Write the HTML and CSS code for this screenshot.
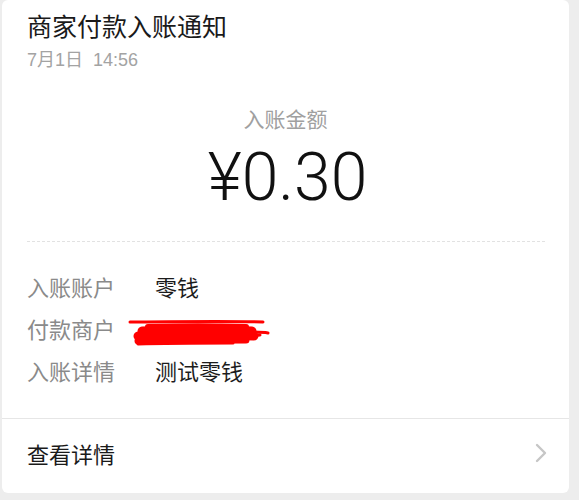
FILE: index.html
```html
<!DOCTYPE html>
<html lang="zh-CN">
<head>
<meta charset="utf-8">
<title>商家付款入账通知</title>
<link rel="stylesheet" href="styles.css">
</head>
<body>
<div class="card">
  <div class="head">
    <div class="title">商家付款入账通知</div>
    <div class="date">7月1日&nbsp;&nbsp;14:56</div>
  </div>
  <div class="amount-block">
    <div class="amount-label">入账金额</div>
    <div class="amount">¥0.30</div>
  </div>
  <div class="dash"></div>
  <div class="rows">
    <div class="row"><span class="label">入账账户</span><span class="value">零钱</span></div>
    <div class="row"><span class="label">付款商户</span><span class="value redacted">
      <svg class="scribble" width="146" height="30" viewBox="0 0 146 30">
        <g fill="none" stroke="#ff0000" stroke-linecap="round" stroke-linejoin="round">
          <path d="M2 4 C40 4 90 3 135 4" stroke-width="3"/>
          <path d="M20 9 C50 8 90 8 118 9" stroke-width="6"/>
          <path d="M14 13 C45 12 95 12 124 13" stroke-width="9"/>
          <path d="M10 18 C40 17 90 17 126 18" stroke-width="9"/>
          <path d="M10 23 C40 22 90 22 118 22" stroke-width="7"/>
          <path d="M10 26 C40 25 80 25 105 25" stroke-width="3"/>
          <path d="M118 14 C126 14 134 14 140 15" stroke-width="3"/>
          <path d="M116 18 L132 17" stroke-width="3"/>
        </g>
      </svg>
    </span></div>
    <div class="row"><span class="label">入账详情</span><span class="value">测试零钱</span></div>
  </div>
  <div class="footer">
    <span class="footer-text">查看详情</span>
    <svg class="chev" width="12" height="20" viewBox="0 0 12 20"><path d="M2 2 L10 10 L2 18" fill="none" stroke="#c6c6c6" stroke-width="2.4" stroke-linecap="round" stroke-linejoin="round"/></svg>
  </div>
</div>
</body>
</html>
```
FILE: styles.css
```css
html, body {
  margin: 0;
  padding: 0;
  background: #ededed;
}
body {
  font-family: "Liberation Sans", "Noto Sans CJK SC", sans-serif;
  width: 579px;
  height: 500px;
  overflow: hidden;
}
.card {
  background: #ffffff;
  margin: 0 10px 0 2px;
  height: 493px;
  border-radius: 6px;
  display: flex;
  flex-direction: column;
}
.head {
  padding: 12px 25px 0;
}
.title {
  font-size: 25px;
  line-height: 30px;
  color: #1a1a1a;
}
.date {
  margin-top: 7px;
  font-size: 18px;
  line-height: 22px;
  color: #a3a3a3;
}
.amount-block {
  margin-top: 36px;
  display: flex;
  flex-direction: column;
  align-items: center;
}
.amount-label {
  font-size: 21px;
  line-height: 26px;
  color: #a0a0a0;
}
.amount {
  margin: 10px 0 0 4px;
  font-family: Roboto, "Liberation Sans", sans-serif;
  font-weight: 300;
  font-size: 66px;
  line-height: 70px;
  height: 70px;
  color: #111111;
}
.dash {
  margin: 28px 24px 0 25px;
  height: 0;
  border-top: 1px dashed #e2e2e2;
}
.rows {
  padding: 23px 25px 0;
}
.row {
  display: flex;
  align-items: center;
  height: 42px;
  font-size: 22px;
}
.label {
  width: 128px;
  color: #8a8a8a;
  flex: none;
}
.value {
  color: #1c1c1c;
}
.redacted {
  position: relative;
  width: 146px;
  height: 28px;
}
.scribble {
  position: absolute;
  left: -27px;
  top: 4px;
}
.footer {
  margin-top: 27px;
  border-top: 1px solid #e6e6e6;
  flex: 1;
  display: flex;
  align-items: center;
  justify-content: space-between;
  padding: 0 22px 6px 25px;
}
.footer-text {
  font-size: 22px;
  color: #1a1a1a;
}
.chev {
  display: block;
}
```
